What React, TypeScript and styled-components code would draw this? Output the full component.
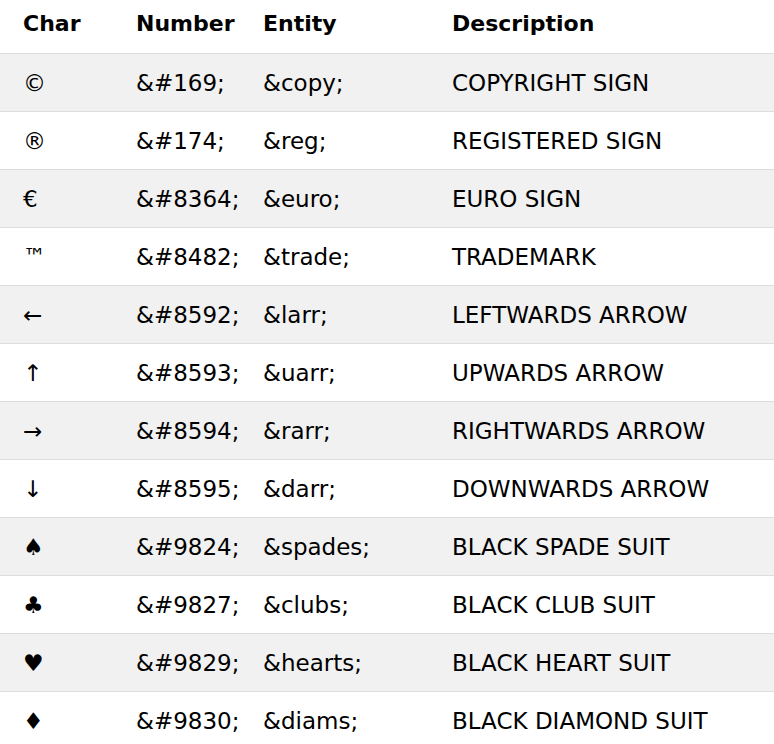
import React from "react";
import styled, { createGlobalStyle } from "styled-components";

const Global = createGlobalStyle`
  html, body { margin: 0; padding: 0; background: #fff; }
  body { font-family: "DejaVu Sans", Verdana, sans-serif; color: #000; }
`;

const Table = styled.table`
  width: 774px;
  border-collapse: collapse;
  border-spacing: 0;
  table-layout: fixed;
  font-size: 23px;
`;

const Col = styled.col<{ $w?: number }>`
  width: ${(p) => (p.$w ? `${p.$w}px` : "auto")};
`;

const HeadRow = styled.tr`
  border-bottom: 1px solid #ddd;
`;

const Th = styled.th`
  text-align: left;
  font-weight: bold;
  font-size: 22px;
  line-height: 33px;
  padding: 7px 12px 13px 12px;
  white-space: nowrap;
  &:first-child { padding-left: 23px; }
`;

const Row = styled.tr<{ $shade: boolean }>`
  background: ${(p) => (p.$shade ? "#f1f1f1" : "#ffffff")};
  border-bottom: 1px solid #ddd;
`;

const Td = styled.td`
  line-height: 33px;
  padding: 13px 12px 11px 12px;
  white-space: nowrap;
  vertical-align: top;
  &:first-child { padding-left: 23px; }
`;

const rows: [string, string, string, string][] = [
  ["\u00A9", "&#169;", "&copy;", "COPYRIGHT SIGN"],
  ["\u00AE", "&#174;", "&reg;", "REGISTERED SIGN"],
  ["\u20AC", "&#8364;", "&euro;", "EURO SIGN"],
  ["\u2122", "&#8482;", "&trade;", "TRADEMARK"],
  ["\u2190", "&#8592;", "&larr;", "LEFTWARDS ARROW"],
  ["\u2191", "&#8593;", "&uarr;", "UPWARDS ARROW"],
  ["\u2192", "&#8594;", "&rarr;", "RIGHTWARDS ARROW"],
  ["\u2193", "&#8595;", "&darr;", "DOWNWARDS ARROW"],
  ["\u2660", "&#9824;", "&spades;", "BLACK SPADE SUIT"],
  ["\u2663", "&#9827;", "&clubs;", "BLACK CLUB SUIT"],
  ["\u2665", "&#9829;", "&hearts;", "BLACK HEART SUIT"],
  ["\u2666", "&#9830;", "&diams;", "BLACK DIAMOND SUIT"],
];

export default function App() {
  return (
    <>
      <Global />
      <Table>
        <colgroup>
          <Col $w={124} />
          <Col $w={127} />
          <Col $w={189} />
          <Col />
        </colgroup>
        <thead>
          <HeadRow>
            <Th>Char</Th>
            <Th>Number</Th>
            <Th>Entity</Th>
            <Th>Description</Th>
          </HeadRow>
        </thead>
        <tbody>
          {rows.map((r, i) => (
            <Row key={r[1]} $shade={i % 2 === 0}>
              <Td>{r[0]}</Td>
              <Td>{r[1]}</Td>
              <Td>{r[2]}</Td>
              <Td>{r[3]}</Td>
            </Row>
          ))}
        </tbody>
      </Table>
    </>
  );
}
